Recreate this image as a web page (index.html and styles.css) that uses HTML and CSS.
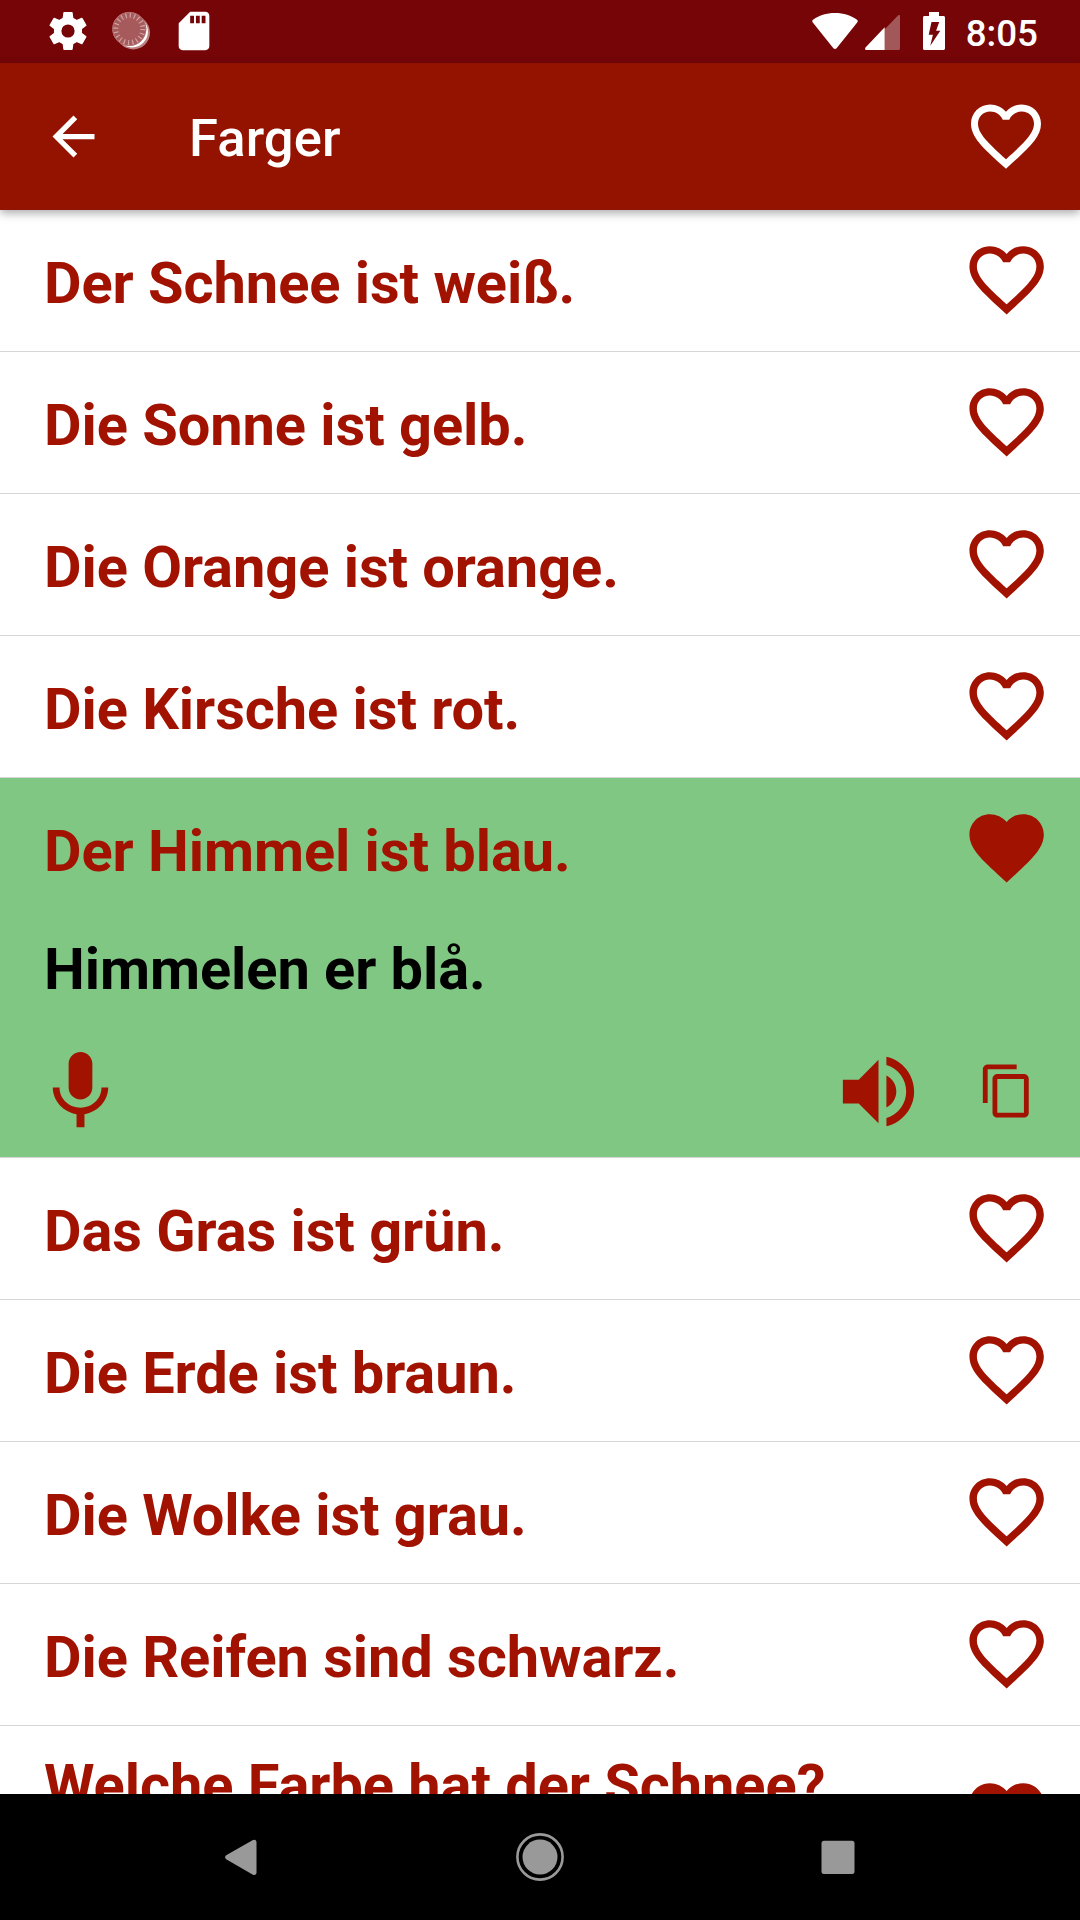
FILE: index.html
```html
<!DOCTYPE html>
<html lang="no">
<head>
<meta charset="utf-8">
<title>Farger</title>
<link rel="stylesheet" href="styles.css">
</head>
<body>
<svg class="defs" aria-hidden="true">
  <symbol id="heart" viewBox="0 0 24 24"><path d="M12 21.35l-1.45-1.32C5.4 15.36 2 12.28 2 8.5 2 5.42 4.42 3 7.5 3c1.74 0 3.41.81 4.5 2.09C13.09 3.81 14.76 3 16.5 3 19.58 3 22 5.42 22 8.5c0 3.78-3.4 6.86-8.55 11.54L12 21.35z"/></symbol>
  <symbol id="heart-outline" viewBox="0 0 24 24"><path d="M16.5 3c-1.74 0-3.41.81-4.5 2.09C10.91 3.81 9.24 3 7.5 3 4.42 3 2 5.42 2 8.5c0 3.78 3.4 6.86 8.55 11.54L12 21.35l1.45-1.32C18.6 15.36 22 12.28 22 8.5 22 5.42 19.58 3 16.5 3zm-4.4 15.55l-.1.1-.1-.1C7.14 14.24 4 11.39 4 8.5 4 6.5 5.5 5 7.5 5c1.54 0 3.04.99 3.57 2.36h1.87C13.46 5.99 14.96 5 16.5 5c2 0 3.5 1.5 3.5 3.5 0 2.89-3.14 5.74-7.9 10.05z"/></symbol>
</svg>
<div class="screen">
  <div class="status-bar">
    <div class="slot"><svg class="status-icon" viewBox="0 0 24 24">
      <circle cx="12" cy="12" r="5.4" fill="none" stroke="#fff" stroke-width="3.9"/>
      <g stroke="#fff" stroke-width=".6" stroke-linejoin="round">
        <path id="tooth" d="M9.900 2.400h4.200l.6 4.300h-5.400z"/>
        <use href="#tooth" transform="rotate(60 12 12)"/>
        <use href="#tooth" transform="rotate(120 12 12)"/>
        <use href="#tooth" transform="rotate(180 12 12)"/>
        <use href="#tooth" transform="rotate(240 12 12)"/>
        <use href="#tooth" transform="rotate(300 12 12)"/>
      </g>
    </svg></div>
    <div class="slot"><svg class="status-icon" viewBox="0 0 46 46">
      <circle cx="25.2" cy="24.6" r="16.8" opacity=".5"/>
      <circle cx="24.1" cy="23.6" r="15.8"/>
      <circle cx="21.3" cy="21" r="17" fill="#a65a5b"/>
      <circle cx="21.3" cy="21" r="13.5" fill="none" stroke="#d0a3a3" stroke-width="5" stroke-dasharray="1.2 3.041"/>
      <circle cx="21.3" cy="21" r="16.6" fill="none" stroke="#b97a7b" stroke-width=".8"/>
    </svg></div>
    <div class="slot"><svg class="status-icon" viewBox="0 0 24 24"><path d="M18 2h-8L4.020 8 4 20c0 1.100.9 2 2 2h12c1.100 0 2-.9 2-2V4c0-1.100-.9-2-2-2zm-6 6h-2V4h2v4zm3 0h-2V4h2v4zm3 0h-2V4h2v4z"/></svg></div>
    <div class="status-right">
      <svg class="wifi" viewBox="0 0 46 38"><path d="M23 37c-.7 0-1.2-.3-1.6-.8L.8 10.6C0 9.600.1 8.500 1 7.800 6.500 3.500 14.500 1 23 1s16.500 2.500 22 6.800c.9.7 1 1.800.2 2.800L24.600 36.200c-.4.5-.9.800-1.600.8z"/></svg>
      <svg class="signal" viewBox="0 0 35 36"><path d="M19.700 15.200L33 1.400c.8-.8 2-.5 2 .7V34.500c0 .8-.7 1.500-1.500 1.500H19.700z" opacity=".33"/><path d="M19.700 13.300V36H1.500C.2 36-.4 34.600.5 33.600z"/></svg>
      <svg class="battery" viewBox="0 0 22 38"><path fill-rule="evenodd" d="M6 0h10v4h4.500c.8 0 1.500.7 1.500 1.500v31c0 .8-.7 1.500-1.500 1.500h-19C.7 38 0 37.300 0 36.500v-31C0 4.700.7 4 1.500 4H6zM8.500 10L5.700 22.700h4.200L7.300 33.800 17.300 18.800h-4.200L16.200 10z"/></svg>
      <span class="clock">8:05</span>
    </div>
  </div>
  <header class="app-bar">
    <svg class="back" viewBox="0 0 24 24"><path d="M20 11H7.830l5.590-5.590L12 4l-8 8 8 8 1.410-1.410L7.830 13H20v-2z"/></svg>
    <h1 class="title">Farger</h1>
    <svg class="bar-heart"><use href="#heart-outline"/></svg>
  </header>
  <main class="list">
    <div class="row"><span class="phrase">Der Schnee ist weiß.</span><svg class="heart"><use href="#heart-outline"/></svg></div>
    <div class="row"><span class="phrase">Die Sonne ist gelb.</span><svg class="heart"><use href="#heart-outline"/></svg></div>
    <div class="row"><span class="phrase">Die Orange ist orange.</span><svg class="heart"><use href="#heart-outline"/></svg></div>
    <div class="row"><span class="phrase">Die Kirsche ist rot.</span><svg class="heart"><use href="#heart-outline"/></svg></div>
    <section class="expanded">
      <div class="head"><span class="phrase">Der Himmel ist blau.</span><svg class="heart"><use href="#heart"/></svg></div>
      <p class="translation">Himmelen er blå.</p>
      <div class="actions">
        <svg class="action" viewBox="0 0 24 24"><path d="M12 14c1.660 0 2.990-1.340 2.990-3L15 5c0-1.660-1.340-3-3-3S9 3.340 9 5v6c0 1.660 1.340 3 3 3zm5.300-3c0 3-2.540 5.100-5.300 5.100S6.700 14 6.700 11H5c0 3.410 2.720 6.230 6 6.720V21h2v-3.280c3.280-.48 6-3.300 6-6.720h-1.700z"/></svg>
        <svg class="action speaker" viewBox="0 0 24 24"><path d="M3 9v6h4l5 5V4L7 9H3zm13.500 3c0-1.770-1.020-3.290-2.500-4.030v8.050c1.480-.73 2.500-2.250 2.500-4.020zM14 3.230v2.060c2.890.86 5 3.540 5 6.710s-2.110 5.850-5 6.710v2.060c4.010-.91 7-4.490 7-8.770s-2.990-7.860-7-8.770z"/></svg>
        <svg class="copy" viewBox="0 0 24 24"><path d="M16 1H4c-1.100 0-2 .9-2 2v14h2V3h12V1zm3 4H8c-1.100 0-2 .9-2 2v14c0 1.100.9 2 2 2h11c1.100 0 2-.9 2-2V7c0-1.100-.9-2-2-2zm0 16H8V7h11v14z"/></svg>
      </div>
    </section>
    <div class="row"><span class="phrase">Das Gras ist grün.</span><svg class="heart"><use href="#heart-outline"/></svg></div>
    <div class="row"><span class="phrase">Die Erde ist braun.</span><svg class="heart"><use href="#heart-outline"/></svg></div>
    <div class="row"><span class="phrase">Die Wolke ist grau.</span><svg class="heart"><use href="#heart-outline"/></svg></div>
    <div class="row"><span class="phrase">Die Reifen sind schwarz.</span><svg class="heart"><use href="#heart-outline"/></svg></div>
    <div class="row tall"><span class="phrase">Welche Farbe hat der Schnee?</span><svg class="heart"><use href="#heart"/></svg></div>
  </main>
  <nav class="nav-bar">
    <svg class="nav-icon" viewBox="0 0 60 60"><path d="M15.600 32.500c-2-1.200-2-3.200 0-4.400L41.500 13.200c2.200-1.200 4-.3 4 1.900V45.500c0 2.200-1.800 3.100-4 1.900z"/></svg>
    <svg class="nav-icon" viewBox="0 0 60 60"><circle cx="30" cy="30" r="17.500"/><circle cx="30" cy="30" r="22.600" fill="none" stroke="#999" stroke-width="2.600"/></svg>
    <svg class="nav-icon" viewBox="0 0 60 60"><rect x="13.500" y="13.700" width="33" height="33.300" rx="2.500"/></svg>
  </nav>
</div>
</body>
</html>
```
FILE: styles.css
```css
* { box-sizing: border-box; }
body { margin: 0; font-family: Roboto, sans-serif; background: #fff; }
svg { display: block; flex: none; }
.defs { display: none; }
.screen { width: 1080px; height: 1920px; display: flex; flex-direction: column; overflow: hidden; }

.status-bar { flex: none; height: 63px; padding-left: 37px; display: flex; background: #750507; fill: #fff; color: #fff; }
.slot { width: 63px; height: 62px; display: flex; align-items: center; justify-content: flex-start; padding-left: 8px; }
.status-icon { width: 46px; height: 46px; }
.status-right { margin-left: auto; padding-right: 42px; display: flex; align-items: flex-start; padding-top: 12px; }
.wifi { width: 46px; height: 38px; }
.signal { width: 35px; height: 36px; margin: 2px 0 0 7px; }
.battery { width: 22px; height: 38px; margin-left: 23px; }
.clock { margin: 0 0 0 21px; font-size: 36.75px; font-weight: 500; line-height: 43px; }

.app-bar { flex: none; position: relative; z-index: 1; height: 147px; padding: 0 32px 0 42px; display: flex; align-items: center; background: #941300; fill: #fff; color: #fff; box-shadow: 0 3px 9px rgba(0, 0, 0, .34); }
.back { width: 63px; height: 63px; }
.title { margin: 3px 0 0 84px; font-size: 52.5px; font-weight: 500; line-height: 62px; letter-spacing: .15px; }
.bar-heart { width: 84px; height: 84px; margin: 0 0 2px auto; }

.list { flex: 1; min-height: 0; overflow: hidden; fill: #a21200; color: #a21200; }
.row { height: 142px; padding: 0 29px 0 44px; display: flex; align-items: center; justify-content: space-between; border-bottom: 1px solid #d6d6d6; }
.phrase { padding-top: 4px; font-size: 57.75px; font-weight: 700; line-height: 68px; letter-spacing: -.05px; white-space: nowrap; }
.heart { width: 89.25px; height: 89.25px; margin-bottom: 1px; }
.tall { height: 182px; align-items: flex-start; }
.tall .phrase { padding-top: 25px; }
.tall .heart { margin-top: 46px; }

.expanded { height: 380px; background: #81c784; border-bottom: 1px solid #d6d6d6; }
.head { height: 141px; padding: 0 29px 0 44px; display: flex; align-items: center; justify-content: space-between; }
.translation { margin: 0; padding: 16px 44px 0; font-size: 57.75px; font-weight: 700; line-height: 68px; letter-spacing: -.05px; color: #000; }
.actions { height: 95px; margin-top: 41px; padding: 0 44px 0 33px; display: flex; align-items: center; }
.action { width: 95px; height: 95px; }
.speaker { margin-left: auto; }
.copy { width: 58px; height: 58px; margin: 0 0 1px 52px; }

.nav-bar { flex: none; height: 126px; padding: 0 212px 1px 211px; display: flex; align-items: center; justify-content: space-between; background: #000; fill: #999; }
.nav-icon { width: 60px; height: 60px; }
```
